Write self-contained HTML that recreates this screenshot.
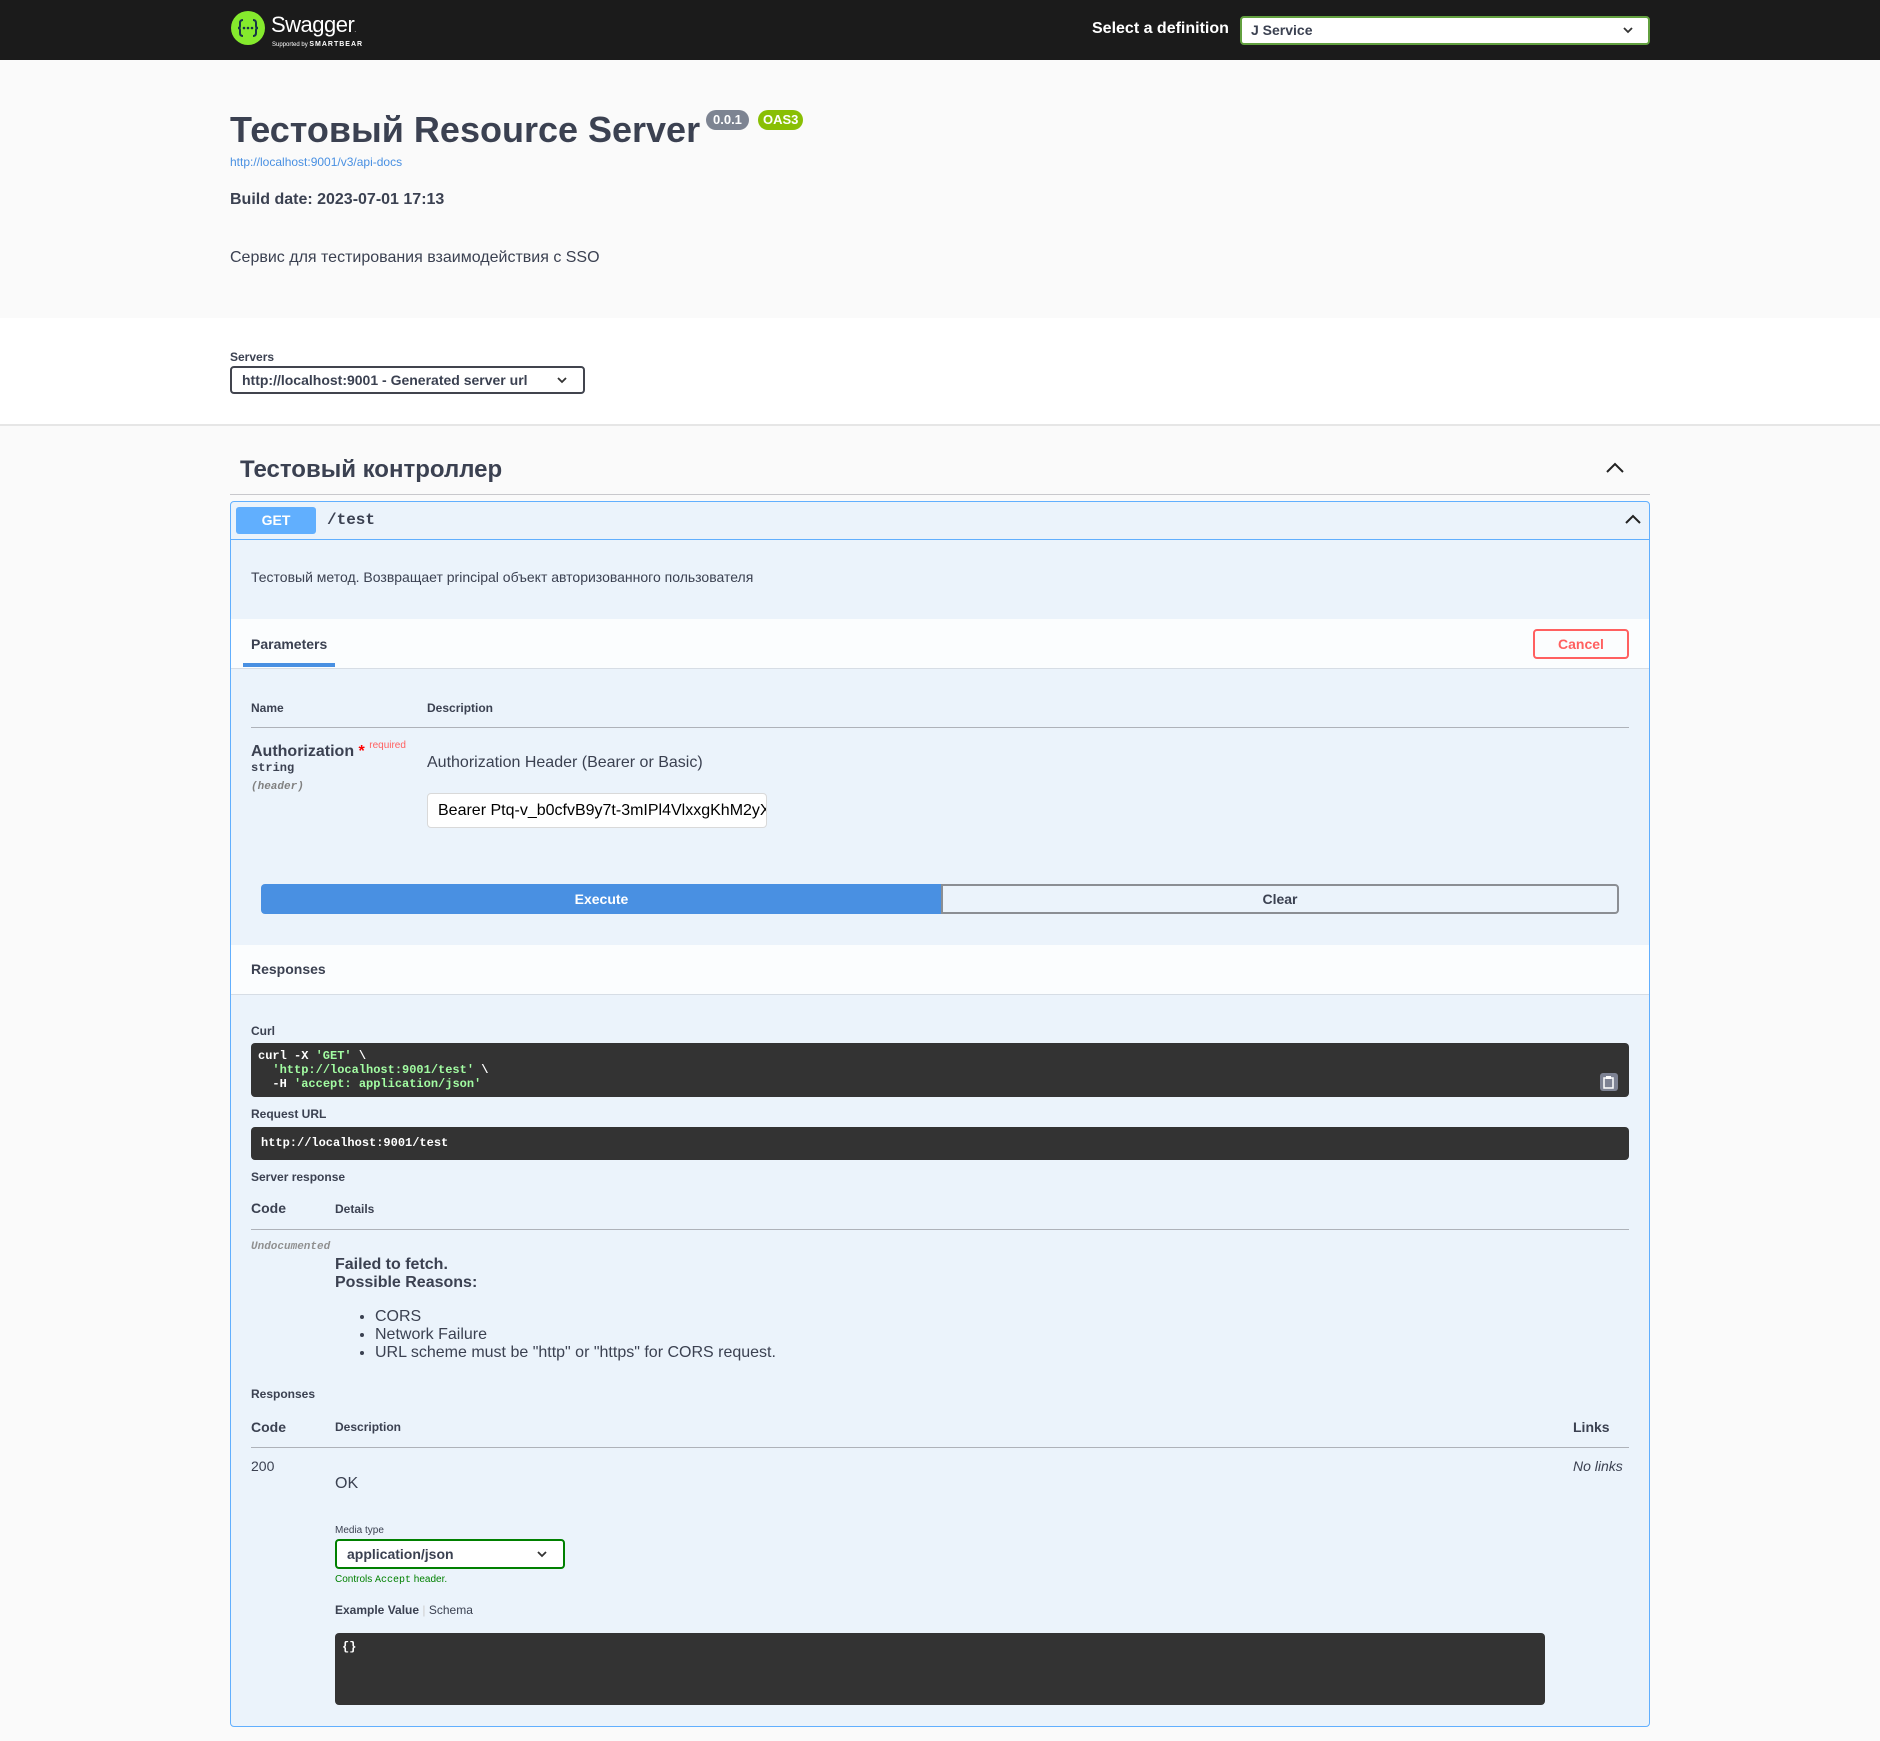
<!DOCTYPE html>
<html><head><meta charset="utf-8"><style>
*{box-sizing:border-box;margin:0;padding:0}
body{width:1880px;height:1741px;background:#fafafa;font-family:"Liberation Sans","Noto Sans CJK SC",sans-serif;color:#3b4151;position:relative;overflow:hidden}
.a{position:absolute;white-space:nowrap}
.mono{font-family:"Liberation Mono","DejaVu Sans Mono",monospace}
.b{font-weight:bold}
</style></head><body>
<div class="a" style="left:0;top:0;width:1880px;height:60px;background:#1b1b1b"></div>
<svg class="a" style="left:230px;top:10px" width="36" height="36" viewBox="0 0 36 36"><circle cx="18" cy="18" r="17" fill="#85ea2d"/><path d="M13 10q-3 0-3 3v3q0 2-2 2q2 0 2 2v3q0 3 3 3M23 10q3 0 3 3v3q0 2 2 2q-2 0-2 2v3q0 3-3 3" stroke="#173647" stroke-width="2" fill="none"/><circle cx="14" cy="18" r="1.3" fill="#173647"/><circle cx="18" cy="18" r="1.3" fill="#173647"/><circle cx="22" cy="18" r="1.3" fill="#173647"/></svg>
<div class="a" style="left:271px;top:12px;font-size:22px;color:#fff;line-height:26px;letter-spacing:-0.5px">Swagger<span style="font-size:6px">.</span></div>
<div class="a" style="left:272px;top:41px;font-size:6px;color:#fff;line-height:8px">Supported by <b style="font-size:7px;letter-spacing:1px">SMARTBEAR</b></div>
<div class="a b" style="left:1092px;top:19px;font-size:16px;color:#fff;line-height:20px">Select a definition</div>
<div class="a" style="left:1240px;top:16px;width:410px;height:29px;background:#fff;border:2px solid #62a03f;border-radius:4px"></div>
<div class="a b" style="left:1251px;top:20px;font-size:14px;color:#3b4151;line-height:20px">J Service</div>
<svg class="a" style="left:1622px;top:24px" width="12" height="12" viewBox="0 0 12 12"><path d="M2 4l4 4 4-4" stroke="#333" stroke-width="1.8" fill="none"/></svg>

<div class="a b" style="left:230px;top:108px;font-size:36px;line-height:44px">Тестовый Resource Server</div>
<div class="a b" style="left:706px;top:110px;height:20px;padding:0 7px;background:#7d8492;color:#fff;border-radius:10px;font-size:13px;line-height:20px">0.0.1</div>
<div class="a b" style="left:758px;top:110px;height:20px;padding:0 5px;background:#89bf04;color:#fff;border-radius:10px;font-size:13px;line-height:20px">OAS3</div>
<div class="a" style="left:230px;top:155px;font-size:12px;color:#4990e2;line-height:14px">http://localhost:9001/v3/api-docs</div>
<div class="a b" style="left:230px;top:190px;font-size:16px;line-height:20px">Build date: 2023-07-01 17:13</div>
<div class="a" style="left:230px;top:248px;font-size:16px;line-height:20px">Сервис для тестирования взаимодействия с SSO</div>

<div class="a" style="left:0;top:318px;width:1880px;height:108px;background:#fff;border-bottom:2px solid #e6e6e6"></div>
<div class="a b" style="left:230px;top:350px;font-size:12px;line-height:14px">Servers</div>
<div class="a" style="left:230px;top:366px;width:355px;height:28px;background:#fff;border:2px solid #41444e;border-radius:4px"></div>
<div class="a b" style="left:242px;top:370px;font-size:14px;line-height:20px">http://localhost:9001 - Generated server url</div>
<svg class="a" style="left:556px;top:374px" width="12" height="12" viewBox="0 0 12 12"><path d="M2 4l4 4 4-4" stroke="#333" stroke-width="1.8" fill="none"/></svg>

<div class="a b" style="left:240px;top:456px;font-size:24px;line-height:28px">Тестовый контроллер</div>
<svg class="a" style="left:1604px;top:461px" width="22" height="14" viewBox="0 0 22 14"><path d="M3 11l8-8 8 8" stroke="#222" stroke-width="2" fill="none"/></svg>
<div class="a" style="left:230px;top:494px;width:1420px;height:1px;background:#c8c8cc"></div>

<div class="a" style="left:230px;top:501px;width:1420px;height:1226px;background:#ebf3fb;border:1px solid #61affe;border-radius:4px"></div>
<div class="a" style="left:231px;top:539px;width:1418px;height:1px;background:#61affe"></div>
<div class="a b" style="left:236px;top:507px;width:80px;height:27px;background:#61affe;color:#fff;border-radius:3px;text-align:center;font-size:14px;line-height:27px">GET</div>
<div class="a b mono" style="left:327px;top:510px;font-size:16px;line-height:20px">/test</div>
<svg class="a" style="left:1623px;top:512px" width="20" height="14" viewBox="0 0 20 14"><path d="M3 11l7-7 7 7" stroke="#222" stroke-width="2" fill="none"/></svg>
<div class="a" style="left:251px;top:569px;font-size:14px;line-height:16px">Тестовый метод. Возвращает principal объект авторизованного пользователя</div>

<div class="a" style="left:231px;top:619px;width:1418px;height:50px;background:rgba(255,255,255,.8);border-bottom:1px solid #d6dde5"></div>
<div class="a b" style="left:251px;top:636px;font-size:14px;line-height:16px">Parameters</div>
<div class="a" style="left:243px;top:663px;width:92px;height:4px;background:#4990e2"></div>
<div class="a b" style="left:1533px;top:629px;width:96px;height:30px;border:2px solid #ff6060;border-radius:4px;color:#ff6060;text-align:center;font-size:14px;line-height:26px;background:transparent">Cancel</div>

<div class="a b" style="left:251px;top:701px;font-size:12px;line-height:14px">Name</div>
<div class="a b" style="left:427px;top:701px;font-size:12px;line-height:14px">Description</div>
<div class="a" style="left:251px;top:727px;width:1378px;height:1px;background:#aeb2b9"></div>
<div class="a b" style="left:251px;top:736px;font-size:16px;line-height:19px">Authorization <span style="color:red">*</span> <span style="color:#ff6060;font-size:10px;font-weight:normal;vertical-align:8px">required</span></div>
<div class="a b mono" style="left:251px;top:761px;font-size:12px;line-height:14px">string</div>
<div class="a mono" style="left:251px;top:781px;font-size:11px;line-height:13px;color:#808080;font-style:italic;font-weight:bold">(header)</div>
<div class="a" style="left:427px;top:753px;font-size:16px;line-height:19px">Authorization Header (Bearer or Basic)</div>
<div class="a" style="left:427px;top:793px;width:340px;height:35px;background:#fff;border:1px solid #d9d9d9;border-radius:4px;overflow:hidden"><div style="padding-left:10px;font-size:16px;line-height:33px;color:#000;white-space:nowrap">Bearer Ptq-v_b0cfvB9y7t-3mIPl4VlxxgKhM2yX</div></div>

<div class="a b" style="left:261px;top:884px;width:681px;height:30px;background:#4990e2;color:#fff;text-align:center;font-size:14px;line-height:30px;border-radius:4px 0 0 4px">Execute</div>
<div class="a b" style="left:941px;top:884px;width:678px;height:30px;border:2px solid #8b8e93;text-align:center;font-size:14px;line-height:26px;border-radius:0 4px 4px 0">Clear</div>

<div class="a" style="left:231px;top:945px;width:1418px;height:50px;background:rgba(255,255,255,.8);border-bottom:1px solid #d6dde5"></div>
<div class="a b" style="left:251px;top:961px;font-size:14px;line-height:16px">Responses</div>

<div class="a b" style="left:251px;top:1024px;font-size:12px;line-height:14px">Curl</div>
<div class="a mono b" style="left:251px;top:1043px;width:1378px;height:54px;background:#333;border-radius:4px;color:#fff;font-size:12px;line-height:14px;padding:6px 7px;white-space:pre">curl -X <span style="color:#a2fca2">'GET'</span> \
  <span style="color:#a2fca2">'http://localhost:9001/test'</span> \
  -H <span style="color:#a2fca2">'accept: application/json'</span></div>
<svg class="a" style="left:1600px;top:1073px" width="18" height="18" viewBox="0 0 18 18"><rect width="18" height="18" rx="3" fill="#7d8293"/><rect x="4" y="5" width="9" height="10" fill="none" stroke="#fff" stroke-width="1.5"/><rect x="6" y="3" width="5" height="3" fill="#fff"/></svg>
<div class="a b" style="left:251px;top:1107px;font-size:12px;line-height:14px">Request URL</div>
<div class="a mono b" style="left:251px;top:1127px;width:1378px;height:33px;background:#333;border-radius:4px;color:#fff;font-size:12px;line-height:33px;padding-left:10px">http://localhost:9001/test</div>
<div class="a b" style="left:251px;top:1170px;font-size:12px;line-height:14px">Server response</div>
<div class="a b" style="left:251px;top:1200px;font-size:14px;line-height:17px">Code</div>
<div class="a b" style="left:335px;top:1202px;font-size:12px;line-height:14px">Details</div>
<div class="a" style="left:251px;top:1229px;width:1378px;height:1px;background:#aeb2b9"></div>
<div class="a mono" style="left:251px;top:1241px;font-size:11px;line-height:12px;color:#909090;font-style:italic;font-weight:bold">Undocumented</div>
<div class="a b" style="left:335px;top:1256px;font-size:16px;line-height:18px">Failed to fetch.<br>Possible Reasons:</div>
<ul class="a" style="left:375px;top:1308px;font-size:16px;line-height:18px;list-style:disc">
<li>CORS</li><li>Network Failure</li><li>URL scheme must be "http" or "https" for CORS request.</li></ul>

<div class="a b" style="left:251px;top:1387px;font-size:12px;line-height:14px">Responses</div>
<div class="a b" style="left:251px;top:1419px;font-size:14px;line-height:17px">Code</div>
<div class="a b" style="left:335px;top:1420px;font-size:12px;line-height:14px">Description</div>
<div class="a b" style="left:1573px;top:1419px;font-size:14px;line-height:17px">Links</div>
<div class="a" style="left:251px;top:1447px;width:1378px;height:1px;background:#aeb2b9"></div>
<div class="a" style="left:251px;top:1458px;font-size:14px;line-height:16px">200</div>
<div class="a" style="left:1573px;top:1458px;font-size:14px;line-height:16px;font-style:italic">No links</div>
<div class="a" style="left:335px;top:1474px;font-size:16px;line-height:19px">OK</div>
<div class="a" style="left:335px;top:1525px;font-size:10px;line-height:12px">Media type</div>
<div class="a" style="left:335px;top:1539px;width:230px;height:30px;background:#fff;border:2px solid #008000;border-radius:4px"></div>
<div class="a b" style="left:347px;top:1544px;font-size:14px;line-height:20px">application/json</div>
<svg class="a" style="left:536px;top:1548px" width="12" height="12" viewBox="0 0 12 12"><path d="M2 4l4 4 4-4" stroke="#333" stroke-width="1.8" fill="none"/></svg>
<div class="a" style="left:335px;top:1574px;font-size:10px;line-height:12px;color:#008000">Controls <span class="mono">Accept</span> header.</div>
<div class="a" style="left:335px;top:1603px;font-size:12px;line-height:14px"><b>Example Value</b> <span style="color:#ccc">|</span> Schema</div>
<div class="a mono b" style="left:335px;top:1633px;width:1210px;height:72px;background:#333;border-radius:4px;color:#fff;font-size:12px;line-height:14px;padding:7px 7px">{}</div>
</body></html>
